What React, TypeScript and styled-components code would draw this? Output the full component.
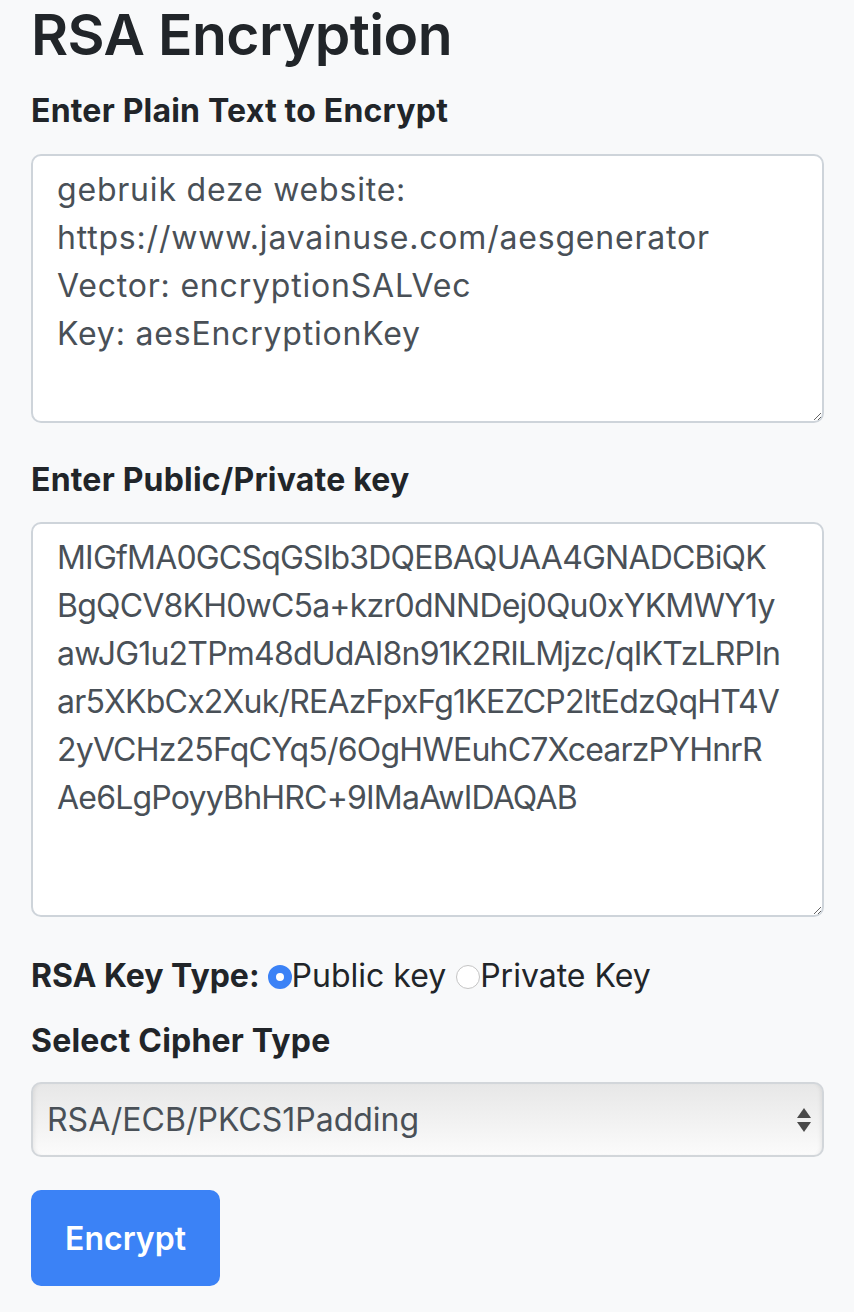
import React from "react";
import styled, { createGlobalStyle } from "styled-components";

const GlobalStyle = createGlobalStyle`
  html, body { margin: 0; padding: 0; background: #f8f9fa; }
  body { font-family: Inter, "Open Sans", sans-serif; color: #212529; }
  * { box-sizing: border-box; }
`;

const Page = styled.div`
  width: 854px;
  min-height: 1312px;
  padding: 0 30px 0 31px;
  display: flex;
  flex-direction: column;
`;

const Title = styled.h1`
  margin: 1px 0 0;
  font-size: 57px;
  line-height: 68px;
  font-weight: 600;
  letter-spacing: -0.6px;
  color: #212529;
`;

const Label = styled.label<{ $mt: number; $mb: number }>`
  display: block;
  margin-top: ${(p) => p.$mt}px;
  margin-bottom: ${(p) => p.$mb}px;
  font-size: 32px;
  line-height: 48px;
  font-weight: 700;
  letter-spacing: 0.2px;
  color: #212529;
`;

const TextArea = styled.textarea<{ $h: number; $ls: number }>`
  display: block;
  width: 793px;
  height: ${(p) => p.$h}px;
  padding: 10px 24px;
  font-family: inherit;
  font-size: 32px;
  line-height: 48px;
  letter-spacing: ${(p) => p.$ls}px;
  color: #495057;
  background: #fff;
  border: 2px solid #ced4da;
  border-radius: 10px;
  resize: vertical;
  outline: none;
  white-space: pre-wrap;
  overflow: hidden;
`;

const KeyRow = styled.div`
  margin-top: 35px;
  display: flex;
  align-items: center;
  height: 48px;
  font-size: 32px;
  line-height: 48px;
`;

const KeyLabel = styled.span`
  font-weight: 700;
  margin-right: 8px;
`;

const Radio = styled.input`
  appearance: none;
  margin: 2px 0 0;
  width: 24px;
  height: 24px;
  border-radius: 50%;
  border: 1.5px solid #c4c4c4;
  background: #fff;
  flex: none;
  &:checked {
    border: 8px solid #3b82f6;
    background: #fff;
  }
`;

const RadioText = styled.label<{ $mr?: number }>`
  font-weight: 400;
  color: #212529;
  margin-right: ${(p) => p.$mr ?? 0}px;
`;

const SelectWrap = styled.div`
  position: relative;
  width: 793px;
  height: 75px;
`;

const Select = styled.select`
  appearance: none;
  width: 100%;
  height: 100%;
  padding: 0 60px 0 14px;
  font-family: inherit;
  font-size: 32px;
  color: #495057;
  border: 2px solid #d2d6da;
  border-radius: 10px;
  background: linear-gradient(#e7e7e7, #fbfbfb);
  box-shadow: inset 4px 0 4px -3px rgba(0,0,0,0.08), inset -4px 0 4px -3px rgba(0,0,0,0.08);
  outline: none;
`;

const Arrows = styled.svg`
  position: absolute;
  right: 13px;
  top: 26px;
  pointer-events: none;
`;

const Button = styled.button`
  margin-top: 33px;
  align-self: flex-start;
  width: 189px;
  height: 96px;
  border: none;
  border-radius: 10px;
  background: #3b82f6;
  color: #fff;
  font-family: inherit;
  font-size: 32px;
  font-weight: 600;
`;

const plain =
  "gebruik deze website:\nhttps://www.javainuse.com/aesgenerator\nVector: encryptionSALVec\nKey: aesEncryptionKey";
const key =
  "MIGfMA0GCSqGSIb3DQEBAQUAA4GNADCBiQK\nBgQCV8KH0wC5a+kzr0dNNDej0Qu0xYKMWY1y\nawJG1u2TPm48dUdAI8n91K2RILMjzc/qIKTzLRPIn\nar5XKbCx2Xuk/REAzFpxFg1KEZCP2ltEdzQqHT4V\n2yVCHz25FqCYq5/6OgHWEuhC7XcearzPYHnrR\nAe6LgPoyyBhHRC+9IMaAwIDAQAB";

export default function App() {
  return (
    <>
      <GlobalStyle />
      <Page>
        <Title>RSA Encryption</Title>
        <Label $mt={18} $mb={19} htmlFor="plain">Enter Plain Text to Encrypt</Label>
        <TextArea id="plain" $h={269} $ls={0.8} defaultValue={plain} spellCheck={false} />
        <Label $mt={33} $mb={18} htmlFor="key">Enter Public/Private key</Label>
        <TextArea id="key" $h={395} $ls={-0.8} defaultValue={key} spellCheck={false} />
        <KeyRow>
          <KeyLabel>RSA Key Type:</KeyLabel>
          <Radio type="radio" name="kt" id="pub" defaultChecked />
          <RadioText htmlFor="pub" $mr={10}>Public key</RadioText>
          <Radio type="radio" name="kt" id="priv" />
          <RadioText htmlFor="priv">Private Key</RadioText>
        </KeyRow>
        <Label $mt={17} $mb={17} htmlFor="cipher">Select Cipher Type</Label>
        <SelectWrap>
          <Select id="cipher" defaultValue="RSA/ECB/PKCS1Padding">
            <option>RSA/ECB/PKCS1Padding</option>
            <option>RSA/ECB/OAEPWithSHA-1AndMGF1Padding</option>
            <option>RSA/ECB/OAEPWithSHA-256AndMGF1Padding</option>
          </Select>
          <Arrows width="14" height="24" viewBox="0 0 14 24">
            <path d="M7 0 L14 10 L0 10 Z" fill="#4a4a4a" />
            <path d="M0 14 L14 14 L7 24 Z" fill="#4a4a4a" />
          </Arrows>
        </SelectWrap>
        <Button>Encrypt</Button>
      </Page>
    </>
  );
}
